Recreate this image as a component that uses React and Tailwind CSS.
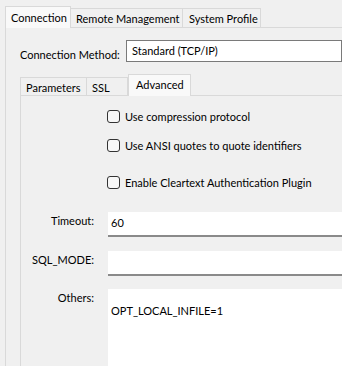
import React from "react";

const Checkbox = ({ label, className = "" }) => (
    <label className={`flex items-center gap-[5px] whitespace-nowrap ${className}`}>
        <span className="w-[13px] h-[13px] rounded-[3px] border border-[#333333] bg-[#f7f7f7] shrink-0" />
        <span>{label}</span>
    </label>
);

const Field = ({ label, value, className = "", tall = false }) => (
    <div className={`flex ${className}`}>
        <div className="w-[94px] shrink-0 text-right pt-[1px] whitespace-nowrap">{label}</div>
        <div
            className={`ml-[14px] flex-1 bg-white border-b-2 border-[#8a8a8a] px-[3px] whitespace-nowrap ${
                tall ? "h-[90px] pt-[14px]" : "h-[25px] pt-[3px]"
            }`}
        >
            {value}
        </div>
    </div>
);

export default function App() {
    return (
        <div
            className="w-[342px] h-[366px] overflow-hidden bg-[#f0f0f0] text-[11px] text-black leading-[15px]"
            style={{ fontFamily: 'Lato, "Noto Sans", sans-serif' }}
        >
            {/* Top tabs */}
            <div className="flex items-end pl-[5px] pt-[6px] h-[27px] whitespace-nowrap">
                <div className="relative z-10 h-[22px] w-[66px] px-[5px] pt-[3px] bg-[#f9f9f9] border border-b-0 border-[#d9d9d9] -mb-px">
                    Connection
                </div>
                <div className="h-[19px] w-[112px] px-[5px] pt-[2px] bg-[#f0f0f0] border border-l-0 border-b-0 border-[#d9d9d9]">
                    Remote Management
                </div>
                <div className="h-[19px] w-[78px] px-[6px] pt-[2px] bg-[#f0f0f0] border border-l-0 border-b-0 border-[#d9d9d9]">
                    System Profile
                </div>
            </div>

            {/* Outer panel */}
            <div className="ml-[5px] border-t border-l border-[#d9d9d9] bg-[#f0f0f0] h-[340px]">
                <div className="flex items-center mt-[12px]">
                    <div className="w-[120px] pl-[14px] pt-[6px] whitespace-nowrap">Connection Method:</div>
                    <div className="flex-1 h-[22px] bg-white border border-[#7a7a7a] pl-[5px] pt-[2px] whitespace-nowrap">
                        Standard (TCP/IP)
                    </div>
                </div>

                {/* Inner tabs */}
                <div className="flex items-end pl-[14px] mt-[12px] h-[21px] whitespace-nowrap">
                    <div className="h-[18px] w-[67px] px-[5px] pt-[2px] bg-[#f0f0f0] border border-b-0 border-[#d9d9d9]">
                        Parameters
                    </div>
                    <div className="h-[18px] w-[41px] px-[5px] pt-[2px] bg-[#f0f0f0] border border-l-0 border-b-0 border-[#d9d9d9]">
                        SSL
                    </div>
                    <div className="relative z-10 h-[22px] w-[63px] px-[7px] pt-[2px] bg-[#f9f9f9] border border-b-0 border-[#d9d9d9] -mb-px">
                        Advanced
                    </div>
                </div>

                {/* Inner panel */}
                <div className="ml-[14px] border-t border-l border-[#d9d9d9] bg-[#f0f0f0] h-[280px]">
                    <div className="pl-[86px] pt-[13px]">
                        <Checkbox label="Use compression protocol" />
                        <Checkbox label="Use ANSI quotes to quote identifiers" className="mt-[14px]" />
                        <Checkbox label="Enable Cleartext Authentication Plugin" className="mt-[22px]" />
                    </div>

                    <div className="-ml-[21px]">
                        <Field label="Timeout:" value="60" className="mt-[22px]" />
                        <Field label="SQL_MODE:" value="" className="mt-[14px]" />
                        <Field label="Others:" value="OPT_LOCAL_INFILE=1" className="mt-[13px]" tall />
                    </div>
                </div>
            </div>
        </div>
    );
}
